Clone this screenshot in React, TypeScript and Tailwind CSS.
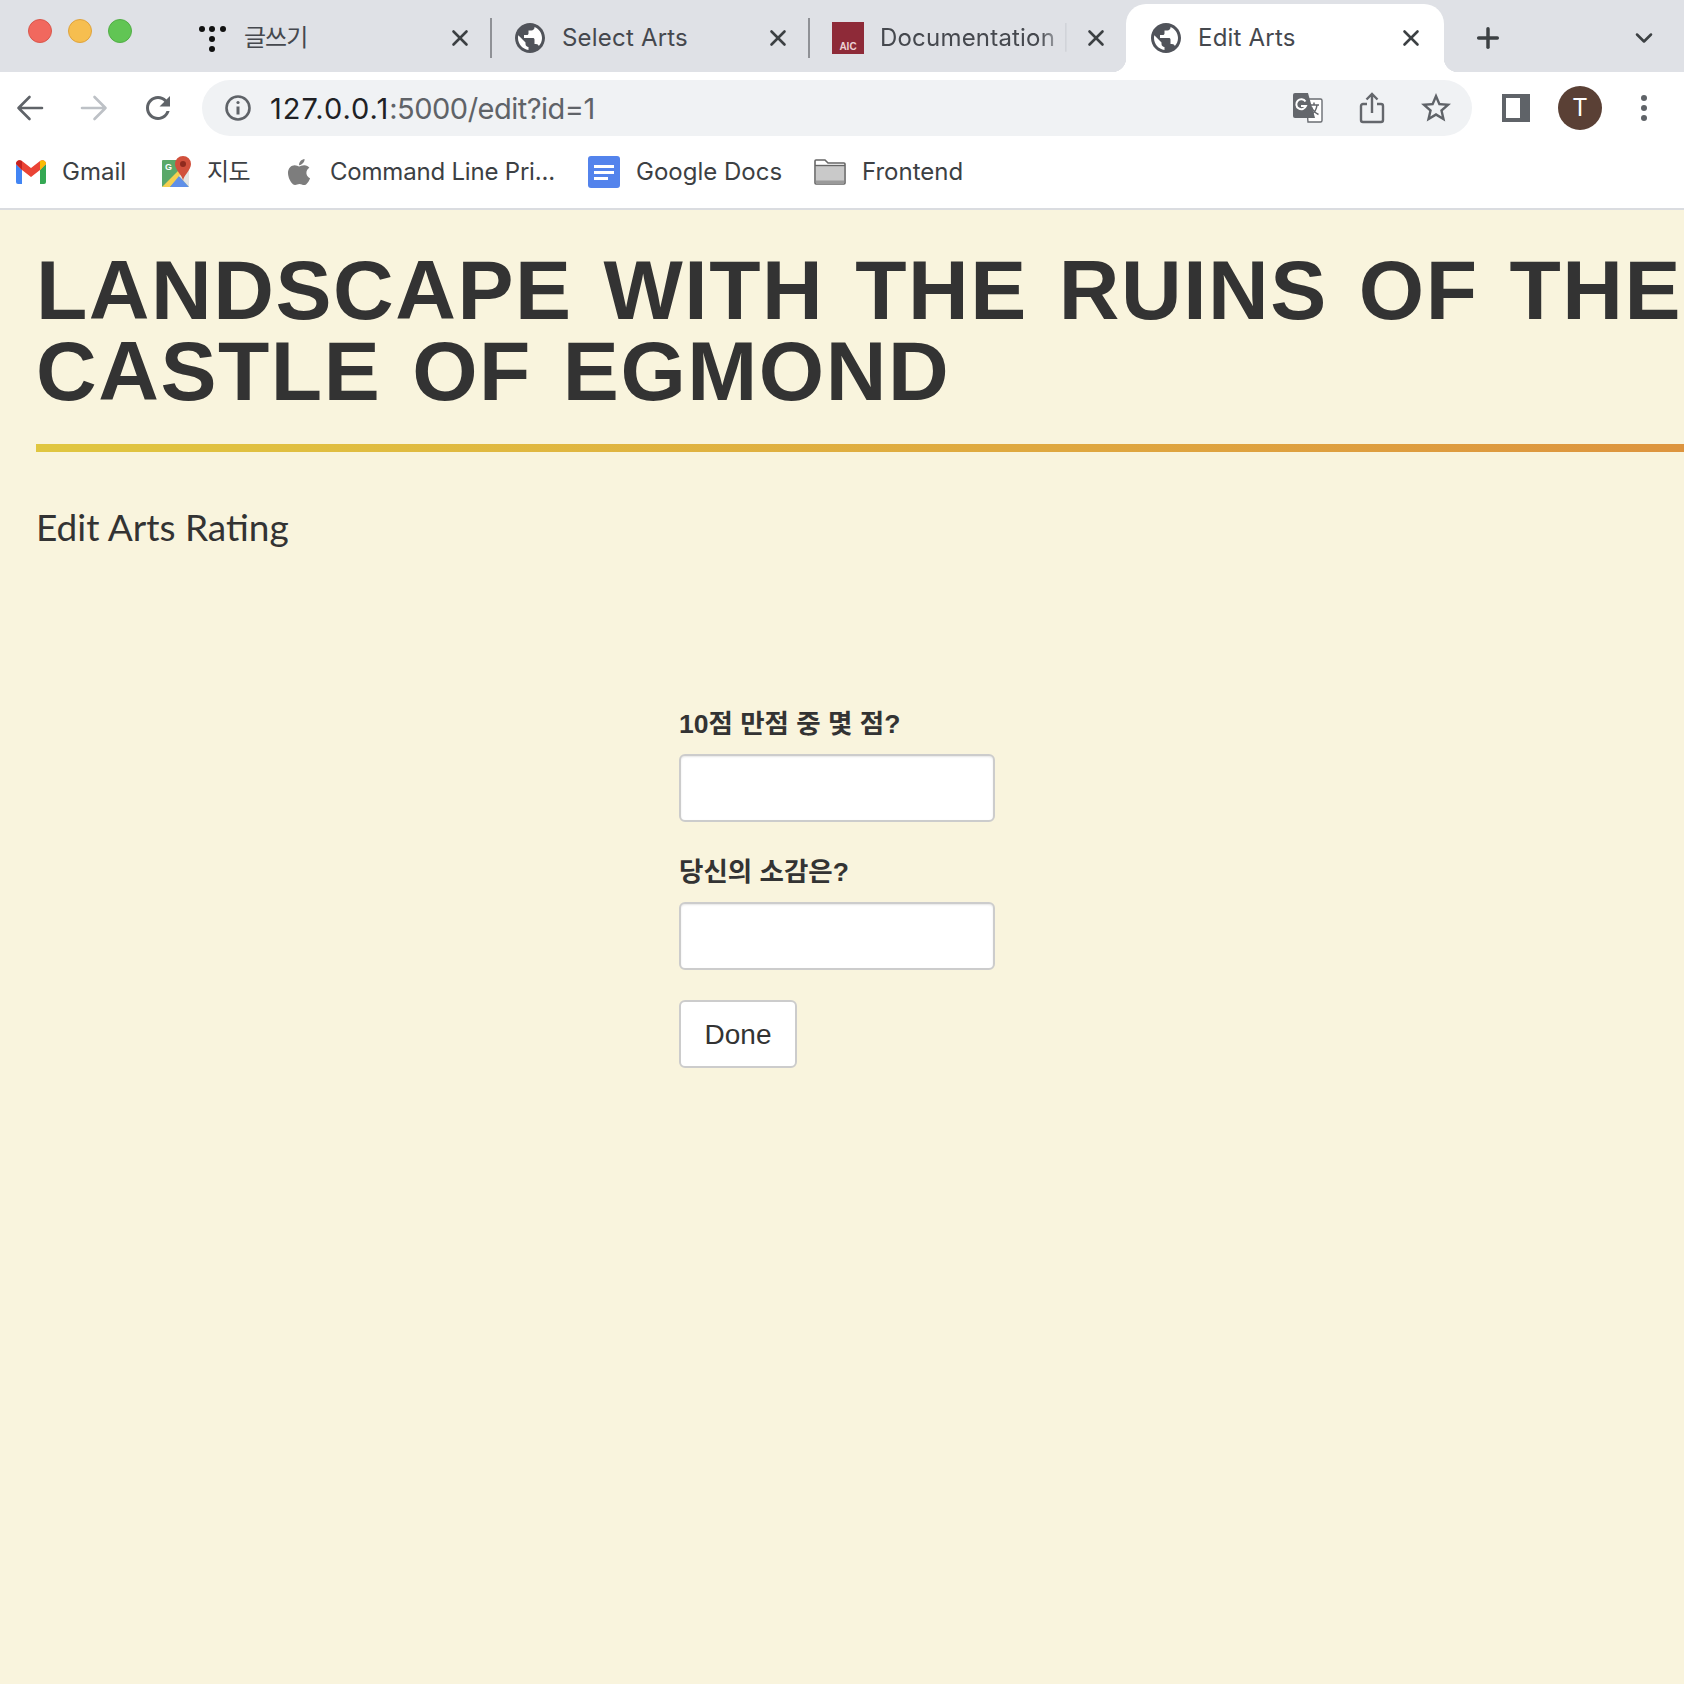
import { ChevronDown, Plus, X } from 'lucide-react';
import type { ReactNode } from 'react';
import { FaApple } from 'react-icons/fa';

const chromeFont = "font-['Inter','Noto_Sans_CJK_KR',sans-serif]";

function GlobeIcon() {
  return (
    <svg viewBox="2 2 20 20" className="h-[30px] w-[30px]" fill="#50535a">
      <circle cx="12" cy="12" r="10" fill="#fff" />
      <path d="M12 2C6.48 2 2 6.48 2 12s4.48 10 10 10 10-4.48 10-10S17.52 2 12 2zm-1 17.93c-3.95-.49-7-3.85-7-7.93 0-.62.08-1.21.21-1.79L9 15v1c0 1.1.9 2 2 2v1.93zm6.9-2.54c-.26-.81-1-1.39-1.9-1.39h-1v-3c0-.55-.45-1-1-1H8v-2h2c.55 0 1-.45 1-1V7h2c1.1 0 2-.9 2-2v-.41c2.93 1.19 5 4.06 5 7.41 0 2.08-.8 3.97-2.1 5.39z" />
    </svg>
  );
}

function DotsLogo() {
  return (
    <svg viewBox="0 0 28 28" className="h-7 w-7" fill="#111">
      <circle cx="4" cy="5" r="3" />
      <circle cx="14" cy="5" r="3" />
      <circle cx="25" cy="5" r="3" />
      <circle cx="14" cy="15" r="3" />
      <circle cx="14" cy="25" r="3" />
    </svg>
  );
}

function AicLogo() {
  return (
    <div className="flex h-8 w-8 items-end justify-center bg-[#8e2a38] pb-[1px] font-['Liberation_Sans',sans-serif] text-[10px] leading-[12px] font-bold text-[#ecd2d4]">
      AIC
    </div>
  );
}

type TabProps = {
  readonly title: ReactNode;
  readonly icon: ReactNode;
  readonly active?: boolean;
  readonly separator?: boolean;
  readonly faded?: boolean;
};

function Tab({ title, icon, active, separator, faded }: TabProps) {
  return (
    <div
      className={`mt-1 flex h-[68px] w-[318px] shrink-0 items-center pb-[1px] ${
        active
          ? "relative rounded-t-[20px] bg-white before:absolute before:right-full before:bottom-0 before:h-[14px] before:w-[14px] before:bg-[radial-gradient(circle_at_0_0,#dfe1e6_14px,#fff_14.5px)] before:content-[''] after:absolute after:bottom-0 after:left-full after:h-[14px] after:w-[14px] after:bg-[radial-gradient(circle_at_100%_0,#dfe1e6_14px,#fff_14.5px)] after:content-['']"
          : ''
      }`}
    >
      <div className="ml-6 flex w-8 shrink-0 justify-center">{icon}</div>
      <div
        className={`ml-4 w-[188px] shrink-0 overflow-hidden text-[24px] leading-8 tracking-[0.2px] whitespace-nowrap text-[#45484e] ${
          faded ? 'mask-r-from-85%' : ''
        }`}
      >
        {title}
      </div>
      <X
        className={`h-[26px] w-[26px] shrink-0 text-[#3c4043] ${active ? 'ml-3' : 'ml-[15px]'}`}
        strokeWidth={2.4}
      />
      {separator ? <div className="ml-[17px] h-10 w-[2px] shrink-0 bg-[#8f9196]" /> : null}
    </div>
  );
}

function ArrowIcon({ direction, color }: { direction: 'left' | 'right'; color: string }) {
  return (
    <svg
      viewBox="0 0 28 28"
      className={`h-7 w-7 shrink-0 ${direction === 'right' ? '-scale-x-100' : ''}`}
      fill="none"
      stroke={color}
      strokeWidth="2.6"
      strokeLinecap="round"
      strokeLinejoin="round"
    >
      <path d="M26 14H2.500M13.500 3 2.500 14l11 11" />
    </svg>
  );
}

function ReloadIcon() {
  return (
    <svg viewBox="0 0 24 24" className="h-9 w-9 shrink-0" fill="#5f6368">
      <path d="M17.65 6.35C16.2 4.9 14.21 4 12 4c-4.42 0-7.99 3.58-7.99 8s3.57 8 7.99 8c3.73 0 6.84-2.55 7.73-6h-2.08c-.82 2.33-3.04 4-5.65 4-3.31 0-6-2.69-6-6s2.69-6 6-6c1.66 0 3.14.69 4.22 1.78L13 11h7V4l-2.35 2.35z" />
    </svg>
  );
}

function InfoIcon() {
  return (
    <svg viewBox="0 0 28 28" className="h-7 w-7" fill="none" stroke="#5f6368" strokeWidth="2.6">
      <circle cx="14" cy="14" r="11.500" />
      <path d="M14 12.500v8" strokeWidth="3" />
      <circle cx="14" cy="8.500" r="1.600" fill="#5f6368" stroke="none" />
    </svg>
  );
}

function TranslateIcon() {
  return (
    <svg viewBox="0 0 30 30" className="h-[30px] w-[30px]">
      <path d="M13 6h14.500a1.500 1.500 0 0 1 1.500 1.500v20a1.500 1.500 0 0 1-1.500 1.500H15z" fill="#fff" stroke="#6a6d72" strokeWidth="1.400" />
      <path d="M2 0h13l7 25H2a2 2 0 0 1-2-2V2a2 2 0 0 1 2-2z" fill="#64676c" />
      <path d="M12.500 8.500A5 5 0 1 0 13 13H8" fill="none" stroke="#fff" strokeWidth="2" />
      <path d="M17 12h9M21 9.500v3M19 21c3-2 4.500-5 5-9M18.500 14c1 3 4 6 7 7.500" fill="none" stroke="#64676c" strokeWidth="1.500" />
    </svg>
  );
}

function ShareIcon() {
  return (
    <svg viewBox="0 0 26 32" className="h-8 w-[26px] shrink-0" fill="none" stroke="#64676c" strokeWidth="2.400">
      <path d="M8 12H4a2 2 0 0 0-2 2v14a2 2 0 0 0 2 2h18a2 2 0 0 0 2-2V14a2 2 0 0 0-2-2h-4" />
      <path d="M13 21V2M7.500 7.500 13 2l5.500 5.500" />
    </svg>
  );
}

function StarIcon() {
  return (
    <svg viewBox="0 0 24 24" className="h-9 w-9 shrink-0" fill="#5f6368">
      <path d="M22 9.240l-7.190-.620L12 2 9.190 8.630 2 9.240l5.460 4.730L5.820 21 12 17.270 18.180 21l-1.630-7.030L22 9.240zM12 15.400l-3.760 2.270 1-4.280-3.320-2.880 4.380-.380L12 6.100l1.710 4.040 4.380.380-3.320 2.880 1 4.280L12 15.400z" />
    </svg>
  );
}

function SidePanelIcon() {
  return (
    <svg viewBox="0 0 28 28" className="h-7 w-7">
      <rect width="28" height="28" fill="#5f6368" />
      <rect x="4" y="4" width="14" height="20" fill="#fff" />
    </svg>
  );
}

function GmailIcon() {
  return (
    <svg viewBox="0 0 30 24" className="h-6 w-[30px]">
      <path d="M0 4v18a2 2 0 0 0 2 2h4V10z" fill="#4285f4" />
      <path d="M30 4v18a2 2 0 0 1-2 2h-4V10z" fill="#34a853" />
      <path d="M0 4c0-3 3-5 6-3l9 7 9-7c3-2 6 0 6 3l-6 6-9 7-9-7z" fill="#ea4335" />
      <path d="M24 1c3-2 6 0 6 3l-6 6z" fill="#fbbc04" />
      <path d="M0 4c0-3 3-5 6-3v9z" fill="#c5221f" />
    </svg>
  );
}

function MapsIcon() {
  return (
    <svg viewBox="0 0 30 32" className="h-8 w-[30px]">
      <rect y="4" width="27" height="27" rx="1" fill="#5aa869" />
      <path d="M0 31 27 4v8L8 31z" fill="#f5d04f" />
      <path d="M8 31 17 20l10 11z" fill="#5f8fe8" />
      <path d="M17 20 27 12v19z" fill="#e4e4e4" />
      <path d="M21 0a8 8 0 0 0-8 8c0 6 8 12 8 17 0-5 8-11 8-17a8 8 0 0 0-8-8z" fill="#d1503c" />
      <circle cx="21" cy="8" r="3" fill="#8f2a1e" />
      <text x="3" y="14" fontSize="9" fontWeight="700" fill="#fff" fontFamily="Liberation Sans">
        G
      </text>
    </svg>
  );
}

function DocsIcon() {
  return (
    <svg viewBox="0 0 32 32" className="h-8 w-8">
      <rect width="32" height="32" rx="3" fill="#5383ec" />
      <path d="M6 9h20v3H6zM6 15h20v3H6zM6 21h14v3H6z" fill="#fff" />
    </svg>
  );
}

function FolderIcon() {
  return (
    <svg viewBox="0 0 32 26" className="h-[26px] w-8">
      <path d="M1 24V2a1 1 0 0 1 1-1h9l3 3h16a1 1 0 0 1 1 1v19a1 1 0 0 1-1 1H2a1 1 0 0 1-1-1z" fill="#fff" stroke="#666" strokeWidth="1.600" />
      <path d="M2 7h28v17H2z" fill="#c9c9c9" />
      <path d="M2 21.500h28V25H2z" fill="#9a9a9a" />
      <path d="M1 6.500h30" stroke="#666" strokeWidth="1.400" />
    </svg>
  );
}

function Bookmark({ icon, label, gap, width }: { icon: ReactNode; label: string; gap: string; width: string }) {
  return (
    <div className={`flex shrink-0 items-center ${width}`}>
      {icon}
      <span className={`${gap} text-[24px] leading-8 whitespace-nowrap text-[#3c4043]`}>{label}</span>
    </div>
  );
}

function Field({ label }: { label: string }) {
  return (
    <label className="block">
      <span className="block font-['Liberation_Sans','Noto_Sans_CJK_KR',sans-serif] text-[26.500px] leading-[36px] font-bold text-[#333]">
        {label}
      </span>
      <input
        type="text"
        className="mt-[12px] block h-[68px] w-[316px] rounded-[6px] border-2 border-[#cccccc] bg-white shadow-[inset_0_1px_2px_rgba(0,0,0,0.1)]"
      />
    </label>
  );
}

export default function App() {
  return (
    <div className="flex min-h-[1684px] flex-col bg-[#f9f4dd]">
      <div className={`${chromeFont} bg-white`}>
        <div className="flex h-[72px] items-start bg-[#dfe1e6]">
          <div className="flex h-[62px] w-[172px] shrink-0 items-center gap-4 pl-7">
            <div className="h-6 w-6 rounded-full border border-[#d9574c] bg-[#f1685e]" />
            <div className="h-6 w-6 rounded-full border border-[#dfa33d] bg-[#f6be4f]" />
            <div className="h-6 w-6 rounded-full border border-[#52ae46] bg-[#61c554]" />
          </div>
          <Tab title={<span className="tracking-[-1px]">글쓰기</span>} icon={<DotsLogo />} separator />
          <Tab title="Select Arts" icon={<GlobeIcon />} separator />
          <Tab title="Documentation | The Art" icon={<AicLogo />} faded />
          <Tab title="Edit Arts" icon={<GlobeIcon />} active />
          <Plus className="mt-[22px] ml-[28px] h-8 w-8 shrink-0 text-[#3c4043]" strokeWidth={2.6} />
          <ChevronDown className="mt-[24px] ml-[126px] h-7 w-7 shrink-0 text-[#3c4043]" strokeWidth={2.2} />
        </div>

        <div className="flex h-[72px] items-center pl-4">
          <ArrowIcon direction="left" color="#5f6368" />
          <div className="ml-9 shrink-0">
            <ArrowIcon direction="right" color="#bdc1c6" />
          </div>
          <div className="ml-8 shrink-0">
            <ReloadIcon />
          </div>
          <div className="ml-[26px] flex h-14 w-[1270px] shrink-0 items-center rounded-full bg-[#f0f2f4] pr-[18px] pl-[22px]">
            <InfoIcon />
            <div className="mt-[2px] ml-[18px] text-[29px] leading-9 tracking-[-0.5px] whitespace-nowrap text-[#5f6368]">
              <span className="tracking-[1px] text-[#202124]">127.0.0.1</span>:5000/edit?id=1
            </div>
            <div className="ml-auto flex items-center">
              <TranslateIcon />
              <div className="ml-[36px] shrink-0">
                <ShareIcon />
              </div>
              <div className="ml-[33px] shrink-0">
                <StarIcon />
              </div>
            </div>
          </div>
          <div className="ml-[30px] shrink-0">
            <SidePanelIcon />
          </div>
          <div className="ml-[28px] flex h-11 w-11 shrink-0 items-center justify-center rounded-full bg-[#5a4035] text-[24px] text-white">
            T
          </div>
          <div className="ml-[39px] flex shrink-0 flex-col gap-[4px]">
            <div className="h-[6px] w-[6px] rounded-full bg-[#5f6368]" />
            <div className="h-[6px] w-[6px] rounded-full bg-[#5f6368]" />
            <div className="h-[6px] w-[6px] rounded-full bg-[#5f6368]" />
          </div>
        </div>

        <div className="flex h-[66px] items-center border-b-2 border-[#dadce0] pb-[8px] pl-4">
          <Bookmark icon={<GmailIcon />} label="Gmail" gap="ml-[16px]" width="w-[146px]" />
          <Bookmark icon={<MapsIcon />} label="지도" gap="ml-[15px] tracking-[-0.5px]" width="w-[126px]" />
          <Bookmark icon={<FaApple className="-ml-[2px] h-[30px] w-[26px] text-[#7d7d7d]" />} label="Command Line Pri..." gap="ml-[18px] tracking-[-0.2px]" width="w-[300px]" />
          <Bookmark icon={<DocsIcon />} label="Google Docs" gap="ml-4" width="w-[226px]" />
          <Bookmark icon={<FolderIcon />} label="Frontend" gap="ml-[16px]" width="w-[160px]" />
        </div>
      </div>

      <main className="pt-[40px] pl-9">
        <h1 className="font-['Liberation_Sans',sans-serif] text-[84px] leading-[81px] font-bold tracking-[1.550px] whitespace-nowrap text-[#333] [word-spacing:6px]">
          LANDSCAPE WITH THE RUINS OF THE
          <br />
          CASTLE OF EGMOND
        </h1>
        <div className="mt-[32px] h-2 bg-gradient-to-r from-[#e0c640] to-[#dd943e]" />
        <h2 className="mt-[53px] font-['Lato',sans-serif] text-[37px] leading-[44px] font-normal text-[#333]">
          Edit Arts Rating
        </h2>

        <form className="mt-[157px] ml-[643px] w-[316px]">
          <Field label="10점 만점 중 몇 점?" />
          <div className="mt-[32px]">
            <Field label="당신의 소감은?" />
          </div>
          <button
            type="button"
            className="mt-[30px] block h-[68px] w-[118px] rounded-[6px] border-2 border-[#cccccc] bg-white pt-[1px] font-['Liberation_Sans',sans-serif] text-[28px] text-[#333]"
          >
            Done
          </button>
        </form>
      </main>
    </div>
  );
}
